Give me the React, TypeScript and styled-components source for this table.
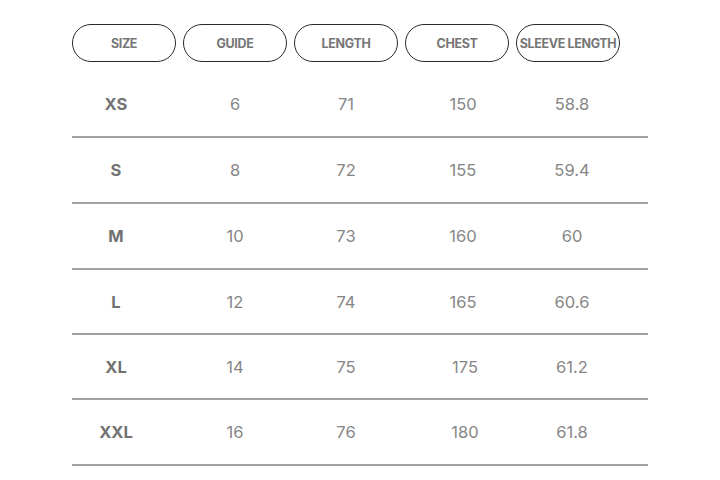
import React from "react";
import styled, { createGlobalStyle } from "styled-components";

const Global = createGlobalStyle`
  html, body { margin: 0; padding: 0; background: #ffffff; }
  body { font-family: Inter, "Noto Sans", "Liberation Sans", sans-serif; }
`;

const Page = styled.div`
  width: 720px;
  height: 480px;
  box-sizing: border-box;
  padding: 24px 0 0 72px;
  background: #fff;
`;

const HeaderRow = styled.div`
  display: flex;
  gap: 7px;
`;

const Pill = styled.div`
  width: 104px;
  height: 38px;
  box-sizing: border-box;
  border: 1.5px solid #2a2a2a;
  border-radius: 19px;
  display: flex;
  align-items: center;
  justify-content: center;
  font-size: 12.5px;
  font-weight: 700;
  color: #767676;
  letter-spacing: -0.35px;
  white-space: nowrap;
`;

const Table = styled.div`
  width: 576px;
  margin-top: 10px;
`;

const Row = styled.div<{ $h: number }>`
  display: grid;
  grid-template-columns: 88px 150px 72px 162px 56px 1fr;
  align-items: center;
  justify-items: center;
  height: ${(p) => p.$h}px;
  box-sizing: border-box;
  border-bottom: 2px solid #a2a2a2;
`;

const SizeCell = styled.div`
  font-size: 16.5px;
  font-weight: 700;
  color: #727272;
`;

const NumCell = styled.div<{ $shift?: number }>`
  font-size: 16.5px;
  font-weight: 400;
  color: #868686;
  transform: translateX(${(p) => p.$shift ?? 0}px);
`;

const headers = ["SIZE", "GUIDE", "LENGTH", "CHEST", "SLEEVE LENGTH"];

const rows: { size: string; vals: string[]; h: number; shift?: number }[] = [
  { size: "XS", vals: ["6", "71", "150", "58.8"], h: 66 },
  { size: "S", vals: ["8", "72", "155", "59.4"], h: 66 },
  { size: "M", vals: ["10", "73", "160", "60"], h: 66 },
  { size: "L", vals: ["12", "74", "165", "60.6"], h: 65 },
  { size: "XL", vals: ["14", "75", "175", "61.2"], h: 65, shift: 2 },
  { size: "XXL", vals: ["16", "76", "180", "61.8"], h: 66, shift: 2 },
];

export default function App() {
  return (
    <>
      <Global />
      <Page>
        <HeaderRow>
          {headers.map((h) => (
            <Pill key={h}>{h}</Pill>
          ))}
        </HeaderRow>
        <Table>
          {rows.map((r) => (
            <Row key={r.size} $h={r.h}>
              <SizeCell>{r.size}</SizeCell>
              {r.vals.map((v, i) => (
                <NumCell key={i} $shift={i === 2 ? r.shift : 0}>
                  {v}
                </NumCell>
              ))}
            </Row>
          ))}
        </Table>
      </Page>
    </>
  );
}
